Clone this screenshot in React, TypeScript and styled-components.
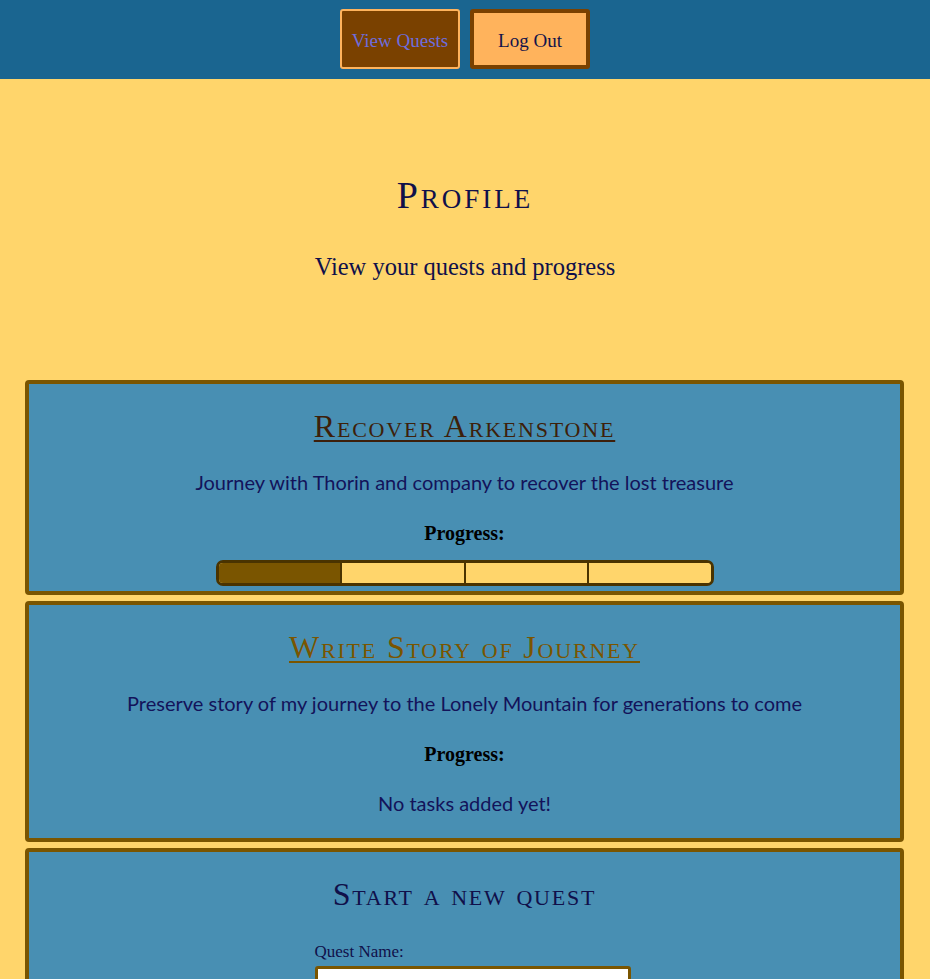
import React from "react";
import styled, { createGlobalStyle } from "styled-components";

const Global = createGlobalStyle`
  html, body { margin: 0; padding: 0; background: #ffd56b; }
  body { font-family: "Lato", "Liberation Sans", sans-serif; }
  * { box-sizing: border-box; }
`;

const Header = styled.header`
  height: 79px;
  background: #1a6590;
  display: flex;
  justify-content: center;
  align-items: flex-start;
  gap: 10px;
  padding-top: 9px;
`;

const NavButton = styled.button<{ $variant: "dark" | "light" }>`
  width: 120px;
  height: 60px;
  padding-top: 4px;
  border-radius: 3px;
  font-family: "Liberation Serif", serif;
  font-size: 19px;
  cursor: pointer;
  background: ${(p) => (p.$variant === "dark" ? "#7a4100" : "#ffb35c")};
  color: ${(p) => (p.$variant === "dark" ? "#6d6ddc" : "#13134a")};
  border: ${(p) => (p.$variant === "dark" ? "2px solid #ffb35c" : "4px solid #7a4100")};
`;

const Hero = styled.section`
  text-align: center;
  padding-top: 96px;
  height: 301px;
`;

const PageTitle = styled.h1`
  margin: 0;
  font-family: "Liberation Serif", serif;
  font-variant: small-caps;
  font-weight: 400;
  font-size: 38px;
  letter-spacing: 3px;
  line-height: 40px;
  color: #10104a;
`;

const Subtitle = styled.p`
  margin: 38px 0 0;
  font-family: "Liberation Serif", serif;
  font-size: 24.5px;
  line-height: 28px;
  color: #10104a;
`;

const Cards = styled.main`
  display: flex;
  flex-direction: column;
  gap: 6px;
  padding: 0 26px 0 25px;
`;

const Card = styled.article`
  background: #488fb3;
  border: 4px solid #7a5500;
  border-radius: 4px;
  text-align: center;
  padding: 22px 20px 5px;
`;

const QuestTitle = styled.a<{ $visited?: boolean }>`
  display: inline-block;
  font-family: "Liberation Serif", serif;
  font-variant: small-caps;
  font-size: 32px;
  letter-spacing: 1.8px;
  line-height: 40px;
  color: ${(p) => (p.$visited ? "#7a5500" : "#3d1f0a")};
  text-decoration: underline;
  text-underline-offset: 3px;
  text-decoration-thickness: 2px;
`;

const Description = styled.p`
  margin: 23px 0 0;
  font-family: "Lato", sans-serif;
  font-size: 20px;
  line-height: 26px;
  color: #13135a;
`;

const ProgressLabel = styled.h3`
  margin: 26px 0 0;
  font-family: "Liberation Serif", serif;
  font-weight: 700;
  font-size: 20px;
  line-height: 24px;
  color: #000;
`;

const Bar = styled.div`
  margin: 15px auto 0;
  width: 498px;
  height: 26px;
  border: 3px solid #4a3300;
  border-radius: 7px;
  display: flex;
  overflow: hidden;
  background: #ffd56b;
`;

const Segment = styled.div<{ $done: boolean }>`
  flex: 1;
  background: ${(p) => (p.$done ? "#7a5500" : "#ffd56b")};
  & + & { border-left: 2px solid #4a3300; }
`;

const Empty = styled.p`
  margin: 24px 0 0;
  font-family: "Lato", sans-serif;
  font-size: 20px;
  line-height: 26px;
  color: #13135a;
  padding-bottom: 17px;
`;

const FormTitle = styled.h2`
  margin: 0;
  font-family: "Liberation Serif", serif;
  font-variant: small-caps;
  font-weight: 400;
  font-size: 32px;
  letter-spacing: 1.8px;
  line-height: 40px;
  color: #10104a;
`;

const Form = styled.form`
  width: 332px;
  margin: 28px auto 0;
  padding-left: 16px;
  display: flex;
  flex-direction: column;
  align-items: flex-start;
`;

const Label = styled.label`
  font-family: "Liberation Serif", serif;
  font-size: 17px;
  line-height: 20px;
  color: #10104a;
`;

const Input = styled.input`
  margin-top: 4px;
  width: 316px;
  height: 36px;
  border: 3px solid #7a5500;
  border-radius: 3px;
  background: #fff;
`;

const quests = [
  {
    title: "Recover Arkenstone",
    desc: "Journey with Thorin and company to recover the lost treasure",
    tasks: [true, false, false, false],
    visited: false,
  },
  {
    title: "Write Story of Journey",
    desc: "Preserve story of my journey to the Lonely Mountain for generations to come",
    tasks: [] as boolean[],
    visited: true,
  },
];

export default function App() {
  return (
    <>
      <Global />
      <Header>
        <NavButton $variant="dark">View Quests</NavButton>
        <NavButton $variant="light">Log Out</NavButton>
      </Header>
      <Hero>
        <PageTitle>Profile</PageTitle>
        <Subtitle>View your quests and progress</Subtitle>
      </Hero>
      <Cards>
        {quests.map((q) => (
          <Card key={q.title}>
            <QuestTitle href="#" $visited={q.visited}>{q.title}</QuestTitle>
            <Description>{q.desc}</Description>
            <ProgressLabel>Progress:</ProgressLabel>
            {q.tasks.length ? (
              <Bar>
                {q.tasks.map((d, i) => (
                  <Segment key={i} $done={d} />
                ))}
              </Bar>
            ) : (
              <Empty>No tasks added yet!</Empty>
            )}
          </Card>
        ))}
        <Card>
          <FormTitle>Start a new quest</FormTitle>
          <Form>
            <Label>Quest Name:</Label>
            <Input />
          </Form>
        </Card>
      </Cards>
    </>
  );
}
